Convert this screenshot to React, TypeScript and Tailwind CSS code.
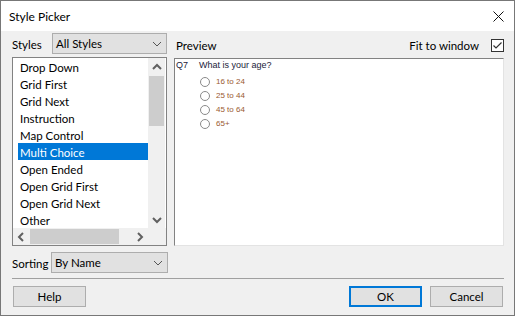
const styles = [
  "Drop Down",
  "Grid First",
  "Grid Next",
  "Instruction",
  "Map Control",
  "Multi Choice",
  "Open Ended",
  "Open Grid First",
  "Open Grid Next",
  "Other",
];

const answers = ["16 to 24", "25 to 44", "45 to 64", "65+"];

const Chevron = ({ dir, bold }: { dir: "up" | "down" | "left" | "right"; bold?: boolean }) => {
  const pts = {
    up: "1,6 5,2 9,6",
    down: "1,2 5,6 9,2",
    left: "6,1 2,5 6,9",
    right: "3,1 7,5 3,9",
  }[dir];
  const vert = dir === "up" || dir === "down";
  return (
    <svg width="10" height={vert ? 8 : 10} viewBox={vert ? "0 0 10 8" : "0 0 10 10"}>
      <polyline points={pts} fill="none" stroke={bold ? "#606060" : "#555"} strokeWidth={bold ? 2 : 1} />
    </svg>
  );
};

const Combo = ({ value, width }: { value: string; width: string }) => (
  <div className={`${width} h-[21px] border border-[#adadad] bg-[#e1e1e1] flex items-center justify-between pl-[3px] pr-[4px]`}>
    <span className="pt-[1px]">{value}</span>
    <Chevron dir="down" />
  </div>
);

const Button = ({ label, primary }: { label: string; primary?: boolean }) => (
  <button
    className={`w-[73px] h-[21px] bg-[#e1e1e1] flex items-center justify-center pt-[1px] ${
      primary ? "border-2 border-[#0078d7]" : "border border-[#adadad]"
    }`}
  >
    {label}
  </button>
);

export default function App() {
  return (
    <div className="w-[515px] h-[316px] border border-[#777] bg-[#f0f0f0] flex flex-col font-['Lato','Noto_Sans',sans-serif] text-[11.5px] text-black leading-none">
      {/* Title bar */}
      <div className="h-[30px] bg-white flex items-center justify-between pl-[8px] pr-[10px]">
        <span className="text-[12px] pt-[1px]">Style Picker</span>
        <svg width="11" height="11" viewBox="0 0 11 11">
          <path d="M0.5 0.5 L10.5 10.5 M10.5 0.5 L0.5 10.5" stroke="#111" strokeWidth="1" />
        </svg>
      </div>

      <div className="flex-1 flex flex-col pl-[11px] pr-[10px] pt-[2px]">
        <div className="flex gap-[7px]">
          {/* Left column */}
          <div className="w-[155px] flex flex-col">
            <div className="flex items-center justify-between h-[21px]">
              <span className="pt-[3px]">Styles</span>
              <Combo value="All Styles" width="w-[115px]" />
            </div>
            <div className="mt-[3px] h-[189px] border border-[#828282] bg-white flex flex-col">
              <div className="flex-1 flex min-h-0">
                <div className="flex-1 pl-[5px] overflow-hidden">
                  {styles.map((s) => (
                    <div
                      key={s}
                      className={`h-[17px] flex items-center pl-[2px] pt-[2px] ${
                        s === "Multi Choice" ? "bg-[#0078d7] text-white" : ""
                      }`}
                    >
                      {s}
                    </div>
                  ))}
                </div>
                <div className="w-[17px] mr-[1px] bg-[#f0f0f0] flex flex-col">
                  <div className="h-[17px] flex items-center justify-center">
                    <Chevron dir="up" bold />
                  </div>
                  <div className="h-[50px] mt-[1px] mx-[1px] bg-[#cdcdcd]" />
                  <div className="flex-1" />
                  <div className="h-[17px] flex items-center justify-center">
                    <Chevron dir="down" bold />
                  </div>
                </div>
              </div>
              <div className="h-[17px] flex bg-[#f0f0f0]">
                <div className="flex-1 flex">
                  <div className="w-[17px] flex items-center justify-center">
                    <Chevron dir="left" bold />
                  </div>
                  <div className="w-[89px] my-[1px] bg-[#cdcdcd]" />
                  <div className="flex-1" />
                  <div className="w-[17px] flex items-center justify-center">
                    <Chevron dir="right" bold />
                  </div>
                </div>
                <div className="w-[18px]" />
              </div>
            </div>
          </div>

          {/* Right column */}
          <div className="flex-1 flex flex-col">
            <div className="h-[21px] flex items-center justify-between pl-[2px]">
              <span className="pt-[4px]">Preview</span>
              <div className="flex items-center gap-[12px] pt-[3px]">
                <span className="pt-[1px]">Fit to window</span>
                <div className="w-[13px] h-[13px] border border-[#333] bg-white flex items-center justify-center">
                  <svg width="11" height="11" viewBox="0 0 11 11">
                    <polyline points="1.5,5.5 4,8 9.5,2.5" fill="none" stroke="#333" strokeWidth="1.2" />
                  </svg>
                </div>
              </div>
            </div>
            <div className="mt-[4px] h-[188px] bg-white border-t border-l border-[#828282] border-r border-b border-r-[#e3e3e3] border-b-[#e3e3e3] font-['Liberation_Sans',Arial,sans-serif]">
              <div className="flex text-[9px] text-[#1b1b3a] pt-[2px] pl-[1px]">
                <span className="w-[23px]">Q7</span>
                <span>What is your age?</span>
              </div>
              <div className="flex flex-col pl-[25px] pt-[7px] gap-[4px]">
                {answers.map((a) => (
                  <div key={a} className="flex items-center gap-[6px] h-[10px]">
                    <div className="w-[10px] h-[10px] rounded-full border border-[#8a8a8a] bg-white" />
                    <span className="text-[8px] text-[#9a5a30]">{a}</span>
                  </div>
                ))}
              </div>
            </div>
          </div>
        </div>

        {/* Sorting row */}
        <div className="mt-[6px] flex items-center h-[21px]">
          <span className="w-[39px] pt-[2px]">Sorting</span>
          <Combo value="By Name" width="w-[117px]" />
        </div>

        <div className="mt-[5px] h-px bg-[#a0a0a0]" />

        <div className="mt-[7px] flex items-center justify-between px-[1px]">
          <Button label="Help" />
          <div className="flex gap-[8px]">
            <Button label="OK" primary />
            <Button label="Cancel" />
          </div>
        </div>
      </div>
    </div>
  );
}
